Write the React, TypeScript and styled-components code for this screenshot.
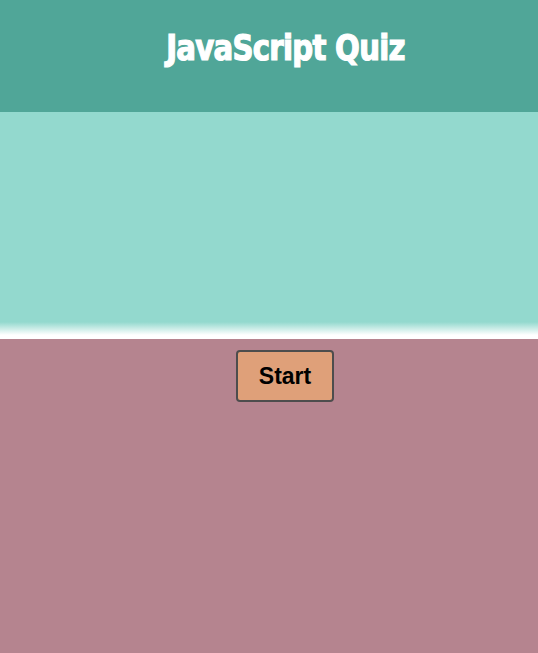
import React from "react";
import styled, { createGlobalStyle } from "styled-components";

const Global = createGlobalStyle`
  html, body { margin: 0; padding: 0; background: #b5848f; }
  body { font-family: "Liberation Sans", Arial, sans-serif; }
`;

const Page = styled.div`
  display: flex;
  flex-direction: column;
  min-height: 653px;
  background: #b5848f;
`;

const Header = styled.header`
  height: 112px;
  background: #50a698;
  display: flex;
  align-items: flex-start;
  justify-content: center;
  padding-left: 32px;
  box-sizing: border-box;
`;

const Title = styled.h1`
  margin: 26px 0 0;
  font-family: Impact, "Liberation Sans Narrow", "DejaVu Sans Condensed", sans-serif;
  font-weight: 700;
  font-size: 36px;
  line-height: 44px;
  color: #ffffff;
  letter-spacing: -0.8px;
  -webkit-text-stroke: 1.2px #ffffff;
  transform: scaleX(0.9);
  transform-origin: center;
`;

const QuizArea = styled.section`
  height: 227px;
  background: linear-gradient(
    to bottom,
    #93d9ce 0,
    #93d9ce 210px,
    #ffffff 223px,
    #ffffff 227px
  );
`;

const Controls = styled.div`
  display: flex;
  justify-content: center;
  padding: 11px 0 0 32px;
`;

const StartButton = styled.button`
  width: 98px;
  height: 52px;
  background: #dfa079;
  border: 2px solid #4d4d4d;
  border-radius: 4px;
  font-family: "Liberation Sans", Arial, sans-serif;
  font-weight: 700;
  font-size: 23px;
  color: #000;
  cursor: pointer;
  padding: 0;
`;

export default function App() {
  return (
    <Page>
      <Global />
      <Header>
        <Title>JavaScript Quiz</Title>
      </Header>
      <QuizArea />
      <Controls>
        <StartButton>Start</StartButton>
      </Controls>
    </Page>
  );
}
